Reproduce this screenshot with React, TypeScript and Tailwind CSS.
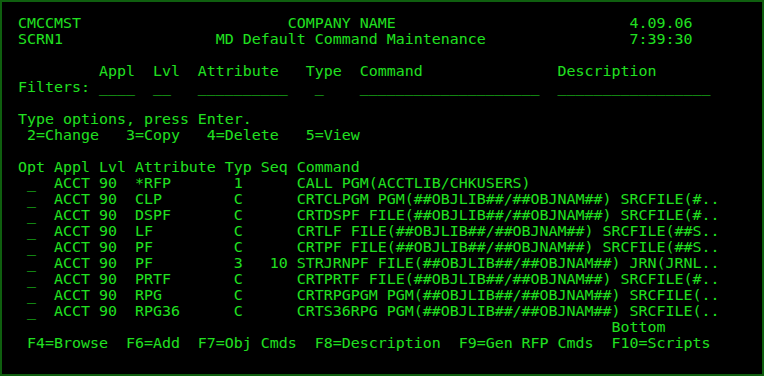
const lines: string[] = [
  "CMCCMST                       COMPANY NAME                          4.09.06",
  "SCRN1                 MD Default Command Maintenance                7:39:30",
  "",
  "         Appl  Lvl  Attribute   Type  Command               Description",
  "Filters: ____  __   __________   _    ____________________  _________________",
  "",
  "Type options, press Enter.",
  " 2=Change   3=Copy   4=Delete   5=View",
  "",
  "Opt Appl Lvl Attribute Typ Seq Command",
  " _  ACCT 90  *RFP       1      CALL PGM(ACCTLIB/CHKUSERS)",
  " _  ACCT 90  CLP        C      CRTCLPGM PGM(##OBJLIB##/##OBJNAM##) SRCFILE(#..",
  " _  ACCT 90  DSPF       C      CRTDSPF FILE(##OBJLIB##/##OBJNAM##) SRCFILE(#..",
  " _  ACCT 90  LF         C      CRTLF FILE(##OBJLIB##/##OBJNAM##) SRCFILE(##S..",
  " _  ACCT 90  PF         C      CRTPF FILE(##OBJLIB##/##OBJNAM##) SRCFILE(##S..",
  " _  ACCT 90  PF         3   10 STRJRNPF FILE(##OBJLIB##/##OBJNAM##) JRN(JRNL..",
  " _  ACCT 90  PRTF       C      CRTPRTF FILE(##OBJLIB##/##OBJNAM##) SRCFILE(#..",
  " _  ACCT 90  RPG        C      CRTRPGPGM PGM(##OBJLIB##/##OBJNAM##) SRCFILE(..",
  " _  ACCT 90  RPG36      C      CRTS36RPG PGM(##OBJLIB##/##OBJNAM##) SRCFILE(..",
  "                                                                  Bottom",
  " F4=Browse  F6=Add  F7=Obj Cmds  F8=Description  F9=Gen RFP Cmds  F10=Scripts",
];

const App = () => {
  return (
    <div className="w-[764px] h-[376px] bg-black border-2 border-[#0f5f0f] pl-4 pt-[13px] overflow-hidden">
      <div className="font-['DejaVu_Sans_Mono',monospace] text-[14.95px] leading-4 text-[#20e020] whitespace-pre">
        {lines.map((line, i) => (
          <div key={i} className="h-4">
            {line}
          </div>
        ))}
      </div>
    </div>
  );
};

export default App;
